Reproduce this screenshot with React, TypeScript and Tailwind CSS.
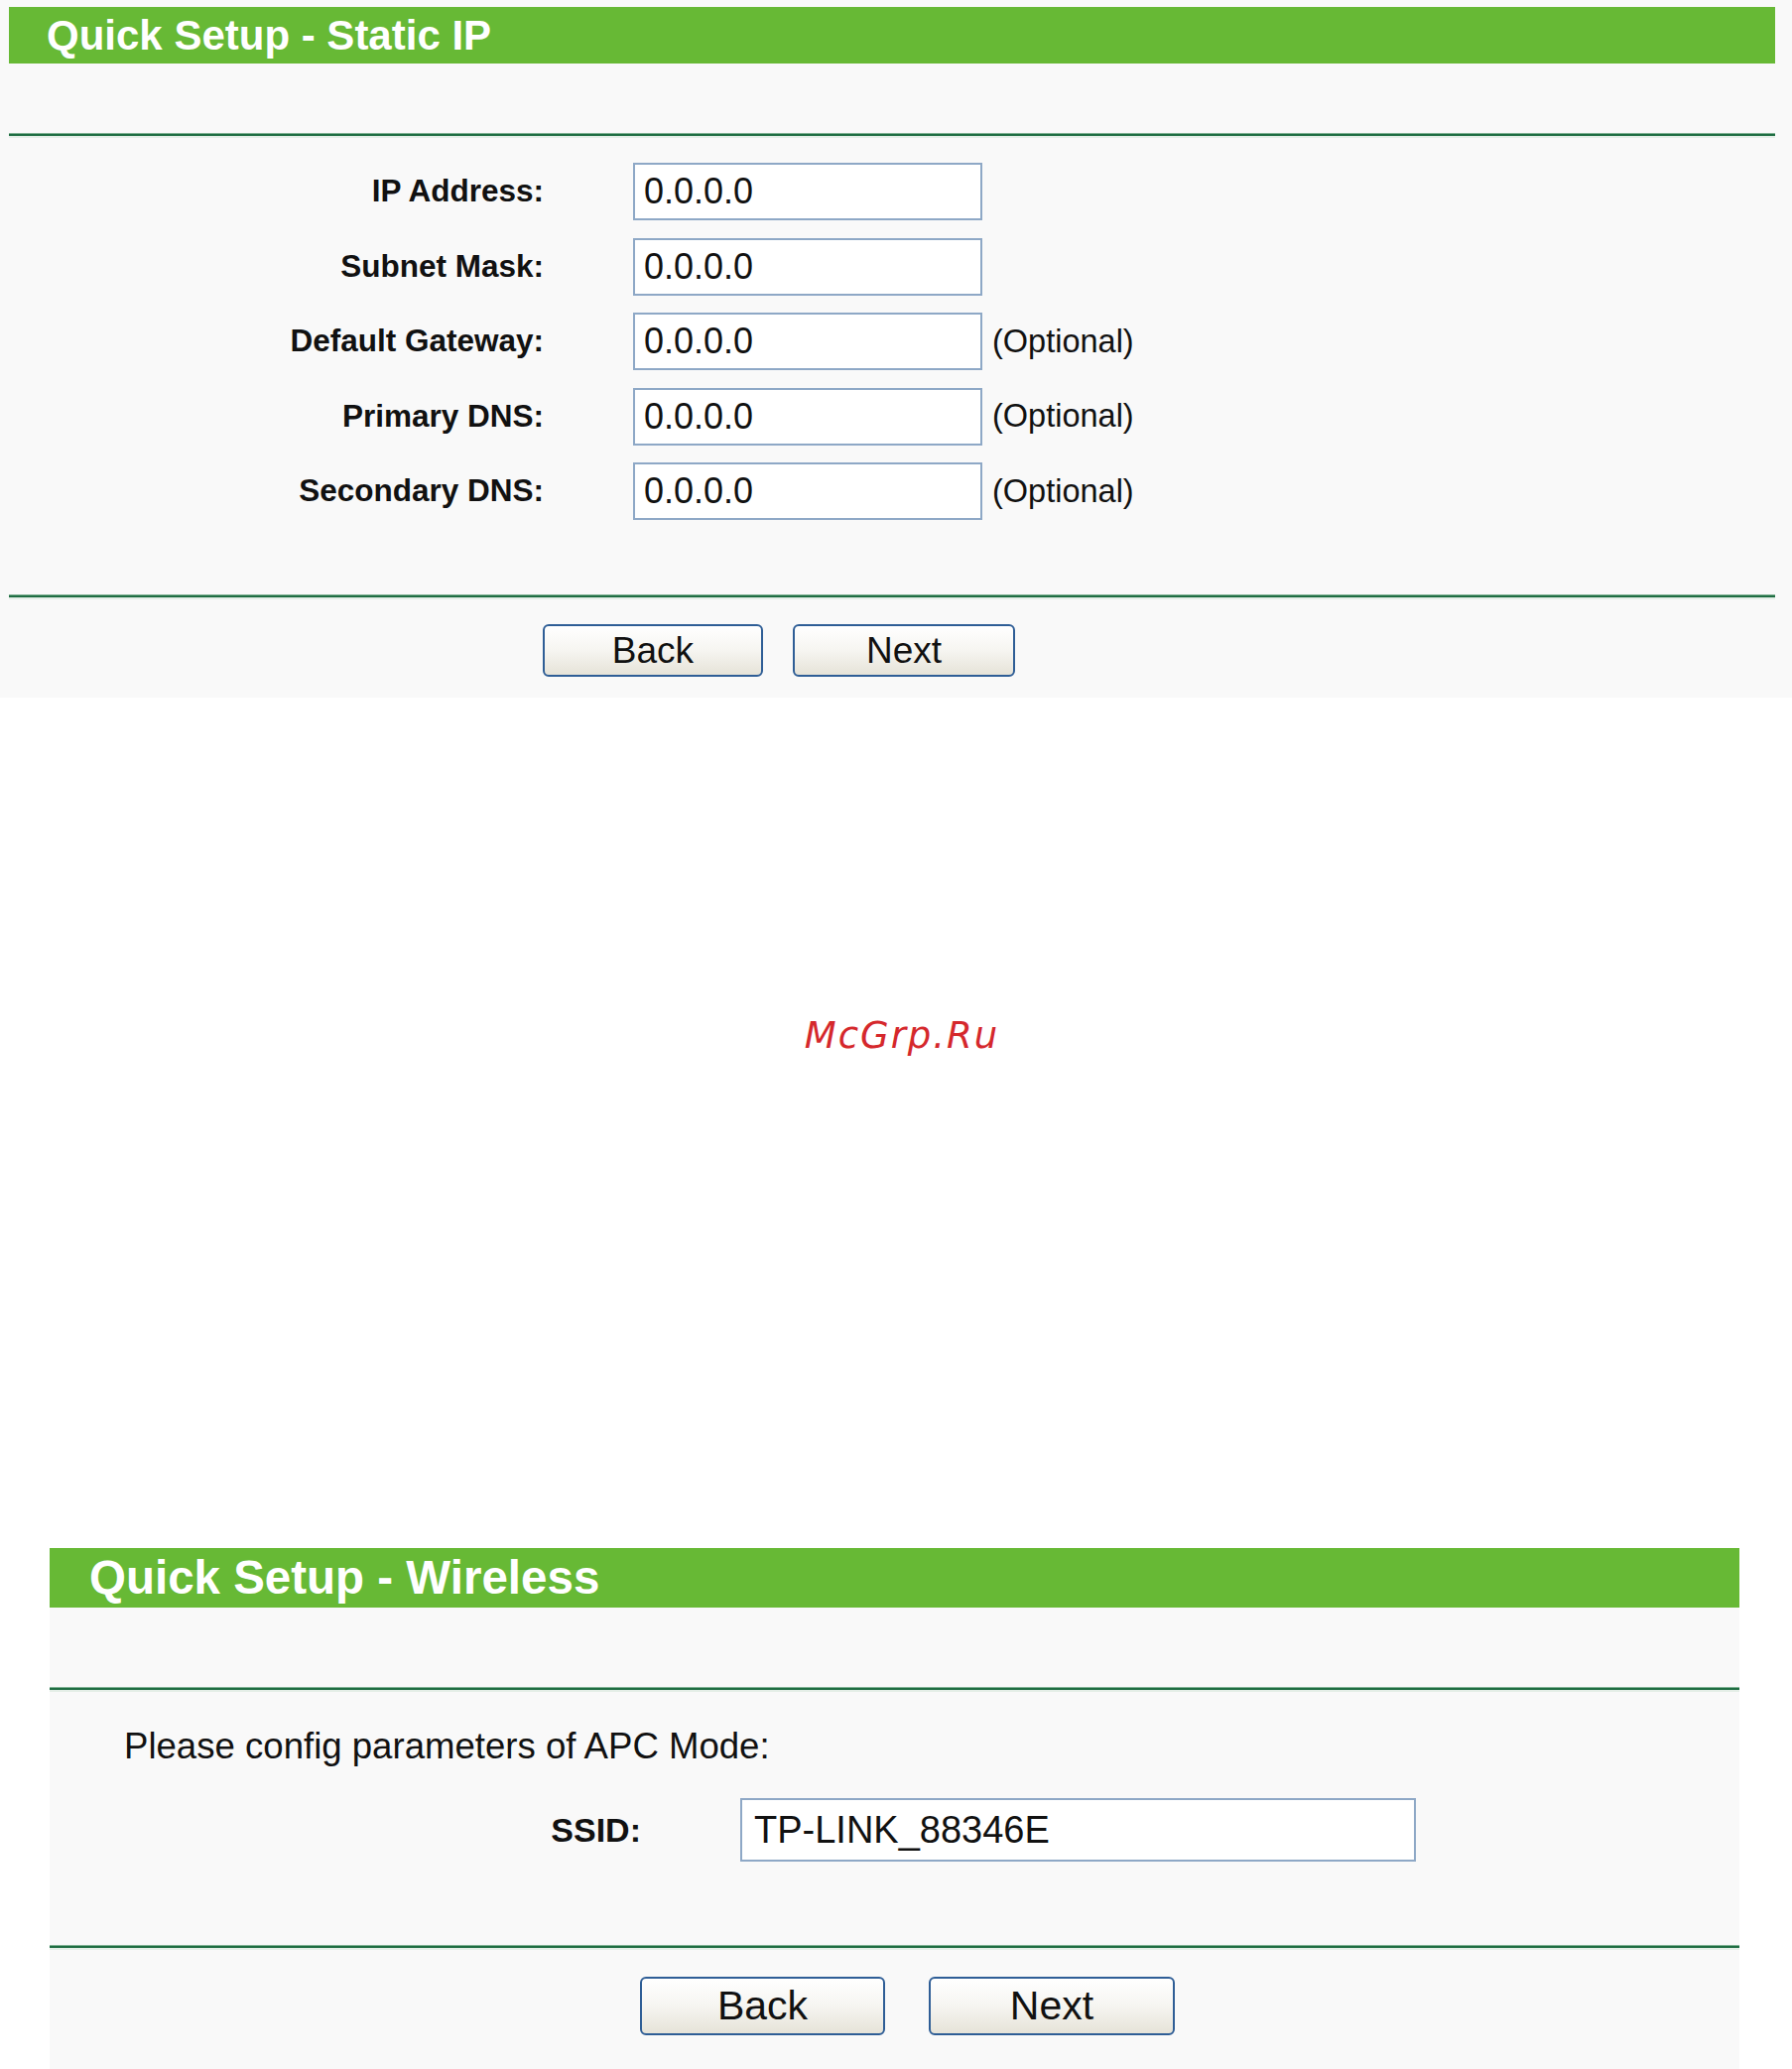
const font = "font-['Liberation_Sans',Arial,sans-serif]";

type Field = { label: string; value: string; optional?: boolean };

const staticFields: Field[] = [
  { label: "IP Address:", value: "0.0.0.0" },
  { label: "Subnet Mask:", value: "0.0.0.0" },
  { label: "Default Gateway:", value: "0.0.0.0", optional: true },
  { label: "Primary DNS:", value: "0.0.0.0", optional: true },
  { label: "Secondary DNS:", value: "0.0.0.0", optional: true },
];

function Divider() {
  return (
    <div className="flex flex-col">
      <div className="h-px bg-[#7fb193]" />
      <div className="h-[2px] bg-[#1f6d42]" />
      <div className="h-[2px] bg-[#e4eee7]" />
    </div>
  );
}

function TitleBar({ title, className }: { title: string; className: string }) {
  return (
    <div className={`flex items-center bg-[#67b935] text-white ${className}`}>
      <span className="font-bold leading-none">{title}</span>
    </div>
  );
}

function WizardButton({ label, className }: { label: string; className: string }) {
  return (
    <button
      type="button"
      className={`flex items-center justify-center rounded-[6px] border-2 border-[#2f5e96] bg-gradient-to-b from-white via-[#f6f5f1] to-[#e6e3d8] text-[#111] leading-none ${className}`}
    >
      {label}
    </button>
  );
}

export default function App() {
  return (
    <div className={`${font} w-[1806px] bg-white`}>
      {/* Static IP step */}
      <div className="h-[703px] bg-[#f9f9f9] pl-[9px] pr-[17px] pt-[7px]">
        <TitleBar title="Quick Setup - Static IP" className="h-[57px] pl-[38px] text-[42px]" />
        <div className="mt-[70px]">
          <Divider />
        </div>
        <div className="mt-[25px] flex flex-col gap-[17.5px]">
          {staticFields.map((f) => (
            <div key={f.label} className="flex items-center">
              <div className="w-[539px] text-right text-[31.5px] font-bold leading-none text-[#111]">
                {f.label}
              </div>
              <div className="ml-[90px] flex h-[58px] w-[352px] items-center border-2 border-[#8ea8c6] bg-white pl-[9px] text-[36px] leading-none text-[#111]">
                {f.value}
              </div>
              {f.optional && (
                <span className="ml-[10px] text-[32.5px] leading-none text-[#111]">(Optional)</span>
              )}
            </div>
          ))}
        </div>
        <div className="mt-[75px]">
          <Divider />
        </div>
        <div className="mt-[25px] flex gap-[30px] pl-[538px]">
          <WizardButton label="Back" className="h-[53px] w-[222px] text-[37px]" />
          <WizardButton label="Next" className="h-[53px] w-[224px] text-[37px]" />
        </div>
      </div>

      {/* watermark area */}
      <div className="flex h-[857px] justify-center pl-[12px] pt-[322px]">
        <span className="font-['DejaVu_Sans',sans-serif] text-[37px] italic leading-none tracking-[2px] text-[#d5282c]">
          McGrp.Ru
        </span>
      </div>

      {/* Wireless step */}
      <div className="ml-[50px] h-[525px] w-[1703px] bg-[#f9f9f9]">
        <TitleBar title="Quick Setup - Wireless" className="h-[60px] pl-[40px] text-[47.5px]" />
        <div className="mt-[80px]">
          <Divider />
        </div>
        <div className="mt-[37px] pl-[75px] text-[36.6px] leading-none text-[#111]">
          Please config parameters of APC Mode:
        </div>
        <div className="mt-[33px] flex items-center">
          <div className="w-[596px] text-right text-[34px] font-bold leading-none text-[#111]">SSID:</div>
          <div className="ml-[100px] flex h-[64px] w-[681px] items-center border-2 border-[#8ea8c6] bg-white pl-[12px] text-[38px] leading-none text-[#111]">
            TP-LINK_88346E
          </div>
        </div>
        <div className="mt-[84px]">
          <Divider />
        </div>
        <div className="mt-[27px] flex gap-[44px] pl-[595px]">
          <WizardButton label="Back" className="h-[59px] w-[247px] text-[41px]" />
          <WizardButton label="Next" className="h-[59px] w-[248px] text-[41px]" />
        </div>
      </div>
    </div>
  );
}
